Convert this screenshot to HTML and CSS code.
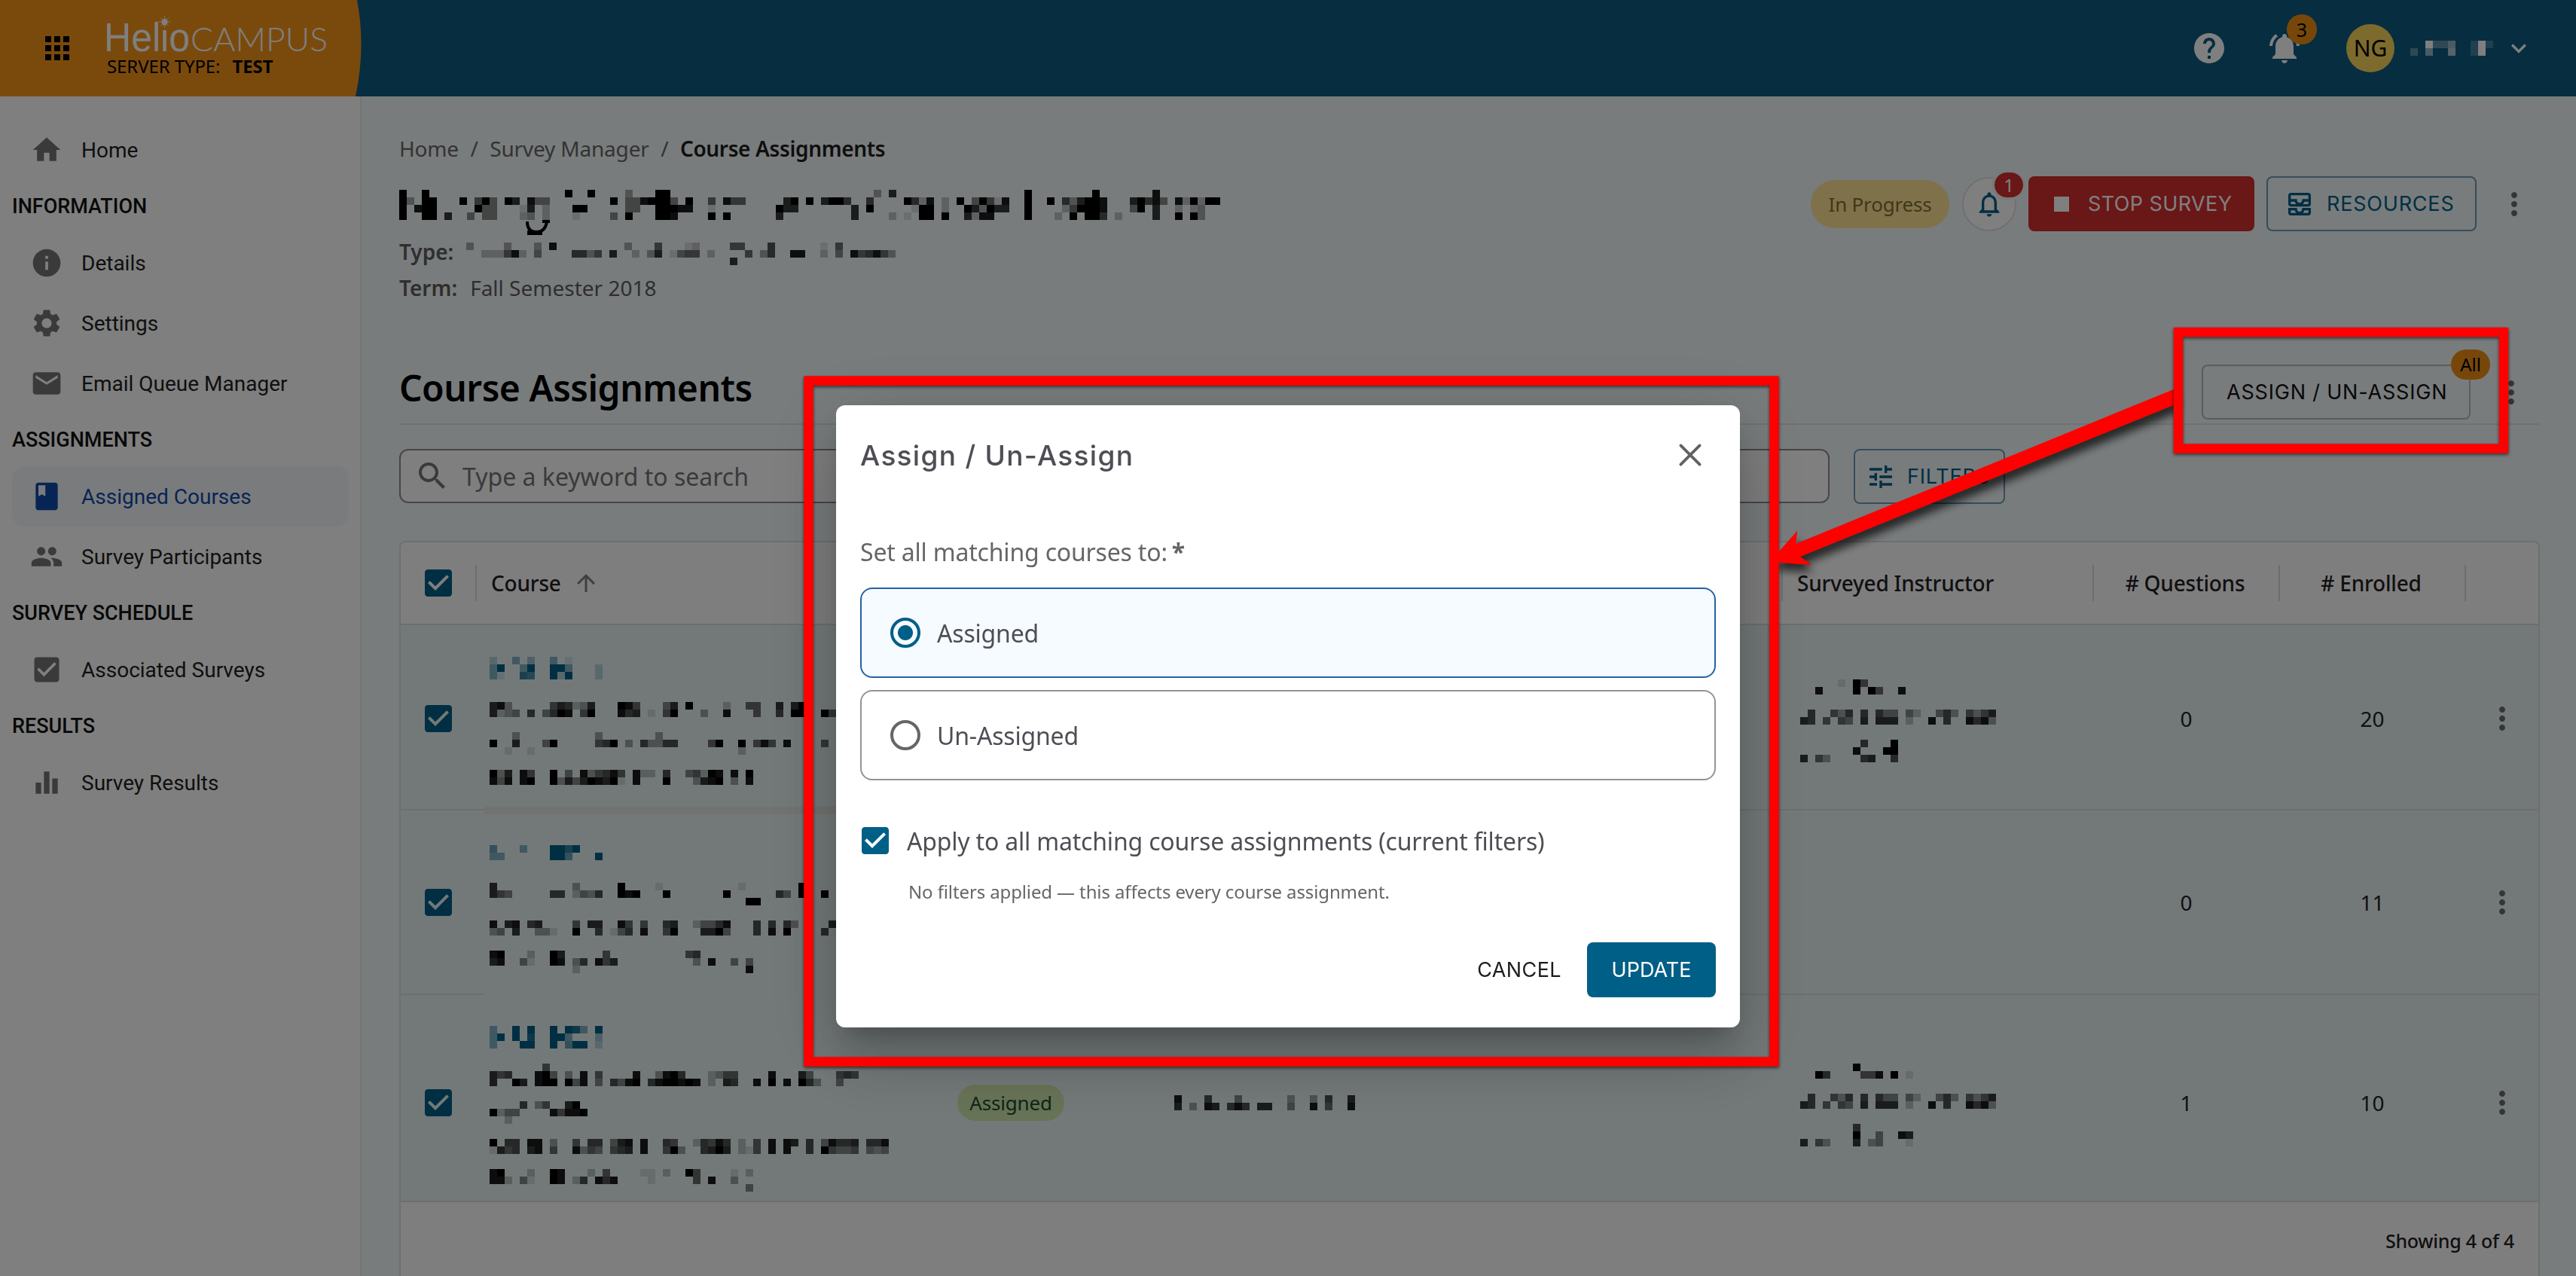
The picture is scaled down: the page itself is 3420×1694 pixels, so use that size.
FILE: index.html
```html
<!DOCTYPE html>
<html lang="en">
<head>
<meta charset="UTF-8" />
<meta name="viewport" content="width=device-width, initial-scale=1" />
<title>Course Assignments</title>
<link rel="stylesheet" href="styles.css">
</head>
<body>

<svg class="sprite" xmlns="http://www.w3.org/2000/svg">
  <symbol id="i-apps" viewBox="0 0 24 24"><path d="M4 8h4V4H4v4zm6 12h4v-4h-4v4zm-6 0h4v-4H4v4zm0-6h4v-4H4v4zm6 0h4v-4h-4v4zm6-10v4h4V4h-4zm-6 4h4V4h-4v4zm6 6h4v-4h-4v4zm0 6h4v-4h-4v4z"/></symbol>
  <symbol id="i-home" viewBox="0 0 24 24"><path d="M10 20v-6h4v6h5v-8h3L12 3 2 12h3v8z"/></symbol>
  <symbol id="i-info" viewBox="0 0 24 24"><path d="M12 2C6.48 2 2 6.48 2 12s4.48 10 10 10 10-4.48 10-10S17.52 2 12 2zm1 15h-2v-6h2v6zm0-8h-2V7h2v2z"/></symbol>
  <symbol id="i-settings" viewBox="0 0 24 24"><path d="M19.14 12.94c.04-.3.06-.61.06-.94 0-.32-.02-.64-.07-.94l2.03-1.58c.18-.14.23-.41.12-.61l-1.92-3.32c-.12-.22-.37-.29-.59-.22l-2.39.96c-.5-.38-1.03-.7-1.62-.94l-.36-2.54c-.04-.24-.24-.41-.48-.41h-3.84c-.24 0-.43.17-.47.41l-.36 2.54c-.59.24-1.13.57-1.62.94l-2.39-.96c-.22-.08-.47 0-.59.22L2.74 8.87c-.12.21-.08.47.12.61l2.03 1.58c-.05.3-.09.63-.09.94s.02.64.07.94l-2.03 1.58c-.18.14-.23.41-.12.61l1.92 3.32c.12.22.37.29.59.22l2.39-.96c.5.38 1.03.7 1.62.94l.36 2.54c.05.24.24.41.48.41h3.84c.24 0 .44-.17.47-.41l.36-2.54c.59-.24 1.13-.56 1.62-.94l2.39.96c.22.08.47 0 .59-.22l1.92-3.32c.12-.22.07-.47-.12-.61l-2.01-1.58zM12 15.6c-1.98 0-3.6-1.62-3.6-3.6s1.62-3.6 3.6-3.6 3.6 1.62 3.6 3.6-1.62 3.6-3.6 3.6z"/></symbol>
  <symbol id="i-mail" viewBox="0 0 24 24"><path d="M20 4H4c-1.1 0-1.99.9-1.99 2L2 18c0 1.1.9 2 2 2h16c1.1 0 2-.9 2-2V6c0-1.1-.9-2-2-2zm0 4l-8 5-8-5V6l8 5 8-5v2z"/></symbol>
  <symbol id="i-book" viewBox="0 0 24 24"><path d="M18 2H6c-1.1 0-2 .9-2 2v16c0 1.1.9 2 2 2h12c1.1 0 2-.9 2-2V4c0-1.1-.9-2-2-2zM6 4h5v8l-2.5-1.5L6 12V4z"/></symbol>
  <symbol id="i-people" viewBox="0 0 24 24"><path d="M16 11c1.66 0 2.99-1.34 2.99-3S17.66 5 16 5c-1.66 0-3 1.34-3 3s1.34 3 3 3zm-8 0c1.66 0 2.99-1.34 2.99-3S9.66 5 8 5C6.34 5 5 6.34 5 8s1.34 3 3 3zm0 2c-2.33 0-7 1.17-7 3.5V19h14v-2.5c0-2.33-4.67-3.5-7-3.5zm8 0c-.29 0-.62.02-.97.05 1.16.84 1.97 1.97 1.97 3.45V19h6v-2.5c0-2.33-4.67-3.5-7-3.5z"/></symbol>
  <symbol id="i-check" viewBox="0 0 24 24"><path d="M19 3H5c-1.11 0-2 .9-2 2v14c0 1.1.89 2 2 2h14c1.11 0 2-.9 2-2V5c0-1.1-.89-2-2-2zm-9 14l-5-5 1.41-1.41L10 14.17l7.59-7.59L19 8l-9 9z"/></symbol>
  <symbol id="i-bars" viewBox="0 0 24 24"><path d="M10 20h4V4h-4v16zm-6 0h4v-8H4v8zM16 9v11h4V9h-4z"/></symbol>
  <symbol id="i-help" viewBox="0 0 24 24"><path d="M12 2C6.48 2 2 6.48 2 12s4.48 10 10 10 10-4.48 10-10S17.52 2 12 2zm1 17h-2v-2h2v2zm2.07-7.75l-.9.92C13.45 12.9 13 13.5 13 15h-2v-.5c0-1.1.45-2.1 1.17-2.83l1.24-1.26c.37-.36.59-.86.59-1.41 0-1.1-.9-2-2-2s-2 .9-2 2H8c0-2.21 1.79-4 4-4s4 1.79 4 4c0 .88-.36 1.68-.93 2.25z"/></symbol>
  <symbol id="i-ring" viewBox="0 0 24 24"><path d="M7.58 4.08L6.15 2.65C3.75 4.48 2.17 7.3 2.03 10.5h2c.15-2.65 1.51-4.97 3.55-6.42zm12.39 6.42h2c-.15-3.2-1.73-6.02-4.12-7.85l-1.42 1.43c2.02 1.45 3.39 3.77 3.54 6.42zM18 11c0-3.07-1.64-5.64-4.5-6.32V4c0-.83-.67-1.5-1.5-1.5s-1.5.67-1.5 1.5v.68C7.63 5.36 6 7.92 6 11v5l-2 2v1h16v-1l-2-2v-5zm-6 11c.14 0 .27-.01.4-.04.65-.14 1.18-.58 1.44-1.18.1-.24.15-.5.15-.78h-4c.01 1.1.9 2 2.01 2z"/></symbol>
  <symbol id="i-bell" viewBox="0 0 24 24"><path d="M12 22c1.1 0 2-.9 2-2h-4c0 1.1.9 2 2 2zm6-6v-5c0-3.07-1.63-5.64-4.5-6.32V4c0-.83-.67-1.5-1.5-1.5s-1.5.67-1.5 1.5v.68C7.64 5.36 6 7.92 6 11v5l-2 2v1h16v-1l-2-2zm-2 1H8v-6c0-2.48 1.51-4.5 4-4.5s4 2.02 4 4.5v6z"/></symbol>
  <symbol id="i-down" viewBox="0 0 24 24"><path d="M16.59 8.59L12 13.17 7.41 8.59 6 10l6 6 6-6z"/></symbol>
  <symbol id="i-stop" viewBox="0 0 24 24"><path d="M6 6h12v12H6z"/></symbol>
  <symbol id="i-inbox" viewBox="0 0 24 24"><path d="M19 3H5c-1.1 0-2 .9-2 2v7c0 1.1.9 2 2 2h14c1.1 0 2-.9 2-2V5c0-1.1-.9-2-2-2zM5 10h3.13c.21.78.67 1.47 1.27 2H5v-2zm14 2h-4.4c.6-.53 1.06-1.22 1.27-2H19v2zm0-4h-5v1c0 1.07-.93 2-2 2s-2-.93-2-2V8H5V5h14v3zm-5 7v1c0 .47-.19.9-.48 1.25-.37.45-.92.75-1.52.75s-1.15-.3-1.52-.75c-.29-.35-.48-.78-.48-1.25v-1H3v4c0 1.1.9 2 2 2h14c1.1 0 2-.9 2-2v-4h-7zm-9 2h3.13c.02.09.06.17.09.25.24.68.65 1.28 1.18 1.75H5v-2zm14 2h-4.4c.54-.47.95-1.07 1.18-1.75.03-.08.07-.17.09-.25H19v2z"/></symbol>
  <symbol id="i-more" viewBox="0 0 24 24"><path d="M12 8c1.1 0 2-.9 2-2s-.9-2-2-2-2 .9-2 2 .9 2 2 2zm0 2c-1.1 0-2 .9-2 2s.9 2 2 2 2-.9 2-2-.9-2-2-2zm0 6c-1.1 0-2 .9-2 2s.9 2 2 2 2-.9 2-2-.9-2-2-2z"/></symbol>
  <symbol id="i-search" viewBox="0 0 24 24"><path d="M15.5 14h-.79l-.28-.27C15.41 12.59 16 11.11 16 9.5 16 5.91 13.09 3 9.5 3S3 5.91 3 9.5 5.91 16 9.5 16c1.61 0 3.09-.59 4.23-1.57l.27.28v.79l5 4.99L20.49 19l-4.99-5zm-6 0C7.01 14 5 11.99 5 9.5S7.01 5 9.5 5 14 7.01 14 9.5 11.99 14 9.5 14z"/></symbol>
  <symbol id="i-tune" viewBox="0 0 24 24"><path d="M3 17v2h6v-2H3zM3 5v2h10V5H3zm10 16v-2h8v-2h-8v-2h-2v6h2zM7 9v2H3v2h4v2h2V9H7zm14 4v-2H11v2h10zm-6-4h2V7h4V5h-4V3h-2v6z"/></symbol>
  <symbol id="i-up" viewBox="0 0 24 24"><path d="M4 12l1.41 1.41L11 7.83V20h2V7.83l5.58 5.59L20 12l-8-8-8 8z"/></symbol>
  <symbol id="i-close" viewBox="0 0 24 24"><path d="M5.7 5.7l12.6 12.6M18.3 5.7L5.7 18.3" fill="none" stroke="currentColor" stroke-width="1.9" stroke-linecap="round"/></symbol>
</svg>

<header class="topbar">
  <div class="brand">
    <svg class="brand-bg" viewBox="0 0 480 128"><path d="M0 0H474Q486 62 472 128H0z"/></svg>
    <svg class="icon icon-48 apps"><use href="#i-apps"/></svg>
    <div class="brand-text">
      <svg class="logo" viewBox="0 0 300 50">
        <text class="logo-helio" x="-4" y="47" textLength="114" lengthAdjust="spacingAndGlyphs">Helio</text>
        <text class="logo-campus" x="111" y="47" textLength="182" lengthAdjust="spacingAndGlyphs">CAMPUS</text>
        <circle cx="76.500" cy="8" r="4"/>
        <path d="M76.500 0v16M68.500 8h16M71 2.500l11 11M82 2.500l-11 11" stroke-width=".8"/>
      </svg>
      <div class="server">SERVER TYPE: <b>TEST</b></div>
    </div>
  </div>
  <div class="user-bar">
    <svg class="icon icon-48"><use href="#i-help"/></svg>
    <div class="notif">
      <svg class="icon icon-48"><use href="#i-ring"/></svg>
      <span class="notif-count">3</span>
    </div>
    <div class="avatar">NG</div>
    <div class="mosaic" data-mosaic="user"></div>
    <svg class="icon icon-40"><use href="#i-down"/></svg>
  </div>
</header>

<div class="layout">
  <nav class="sidebar">
    <a class="nav-item"><svg class="icon icon-44"><use href="#i-home"/></svg>Home</a>
    <div class="nav-title">INFORMATION</div>
    <a class="nav-item"><svg class="icon icon-44"><use href="#i-info"/></svg>Details</a>
    <a class="nav-item"><svg class="icon icon-44"><use href="#i-settings"/></svg>Settings</a>
    <a class="nav-item"><svg class="icon icon-44"><use href="#i-mail"/></svg>Email Queue Manager</a>
    <div class="nav-title">ASSIGNMENTS</div>
    <a class="nav-item active"><svg class="icon icon-44"><use href="#i-book"/></svg>Assigned Courses</a>
    <a class="nav-item"><svg class="icon icon-44"><use href="#i-people"/></svg>Survey Participants</a>
    <div class="nav-title">SURVEY SCHEDULE</div>
    <a class="nav-item"><svg class="icon icon-44"><use href="#i-check"/></svg>Associated Surveys</a>
    <div class="nav-title">RESULTS</div>
    <a class="nav-item"><svg class="icon icon-44"><use href="#i-bars"/></svg>Survey Results</a>
  </nav>

  <main class="main">
    <div class="crumbs">
      <span>Home</span><i>/</i><span>Survey Manager</span><i>/</i><b>Course Assignments</b>
    </div>

    <div class="page-head">
      <div class="survey-info">
        <div class="mosaic survey-title" data-mosaic="title">
        </div>
        <div class="meta"><b>Type:</b><div class="mosaic" data-mosaic="type"></div></div>
        <div class="meta"><b>Term:</b><span>Fall Semester 2018</span></div>
      </div>
      <div class="actions">
        <span class="chip chip-progress">In Progress</span>
        <span class="bell">
          <svg class="icon icon-40"><use href="#i-bell"/></svg>
          <span class="bell-count">1</span>
        </span>
        <button class="btn btn-stop"><svg class="icon icon-40"><use href="#i-stop"/></svg>STOP SURVEY</button>
        <button class="btn btn-outline btn-resources"><svg class="icon icon-40"><use href="#i-inbox"/></svg>RESOURCES</button>
        <svg class="icon icon-48 more"><use href="#i-more"/></svg>
      </div>
    </div>

    <div class="section-head">
      <h1>Course Assignments</h1>
      <div class="section-actions">
        <button class="btn btn-assign">ASSIGN / UN-ASSIGN<span class="all-count">All</span></button>
        <svg class="icon icon-48 more"><use href="#i-more"/></svg>
      </div>
    </div>

    <div class="filters">
      <div class="search"><svg class="icon icon-48"><use href="#i-search"/></svg><span>Type a keyword to search</span></div>
      <button class="btn btn-outline btn-filters"><svg class="icon icon-40"><use href="#i-tune"/></svg>FILTERS</button>
    </div>

    <div class="table">
      <div class="row row-head">
        <div class="cell center"><svg class="icon icon-48 check"><use href="#i-check"/></svg></div>
        <div class="cell">Course<svg class="icon icon-36 sort"><use href="#i-up"/></svg></div>
        <div class="cell"></div>
        <div class="cell"></div>
        <div class="cell">Surveyed Instructor</div>
        <div class="cell center"># Questions</div>
        <div class="cell center"># Enrolled</div>
        <div class="cell"></div>
      </div>
      <div class="row row-1">
        <div class="cell center"><svg class="icon icon-48 check"><use href="#i-check"/></svg></div>
        <div class="cell course"><div class="mosaic" data-mosaic="course1"></div></div>
        <div class="cell"></div>
        <div class="cell"></div>
        <div class="cell instructor"><div class="mosaic" data-mosaic="instructor1"></div></div>
        <div class="cell center">0</div>
        <div class="cell center">20</div>
        <div class="cell center"><svg class="icon icon-48 more"><use href="#i-more"/></svg></div>
      </div>
      <div class="row row-2">
        <div class="cell center"><svg class="icon icon-48 check"><use href="#i-check"/></svg></div>
        <div class="cell course"><div class="mosaic" data-mosaic="course2"></div></div>
        <div class="cell"></div>
        <div class="cell"></div>
        <div class="cell"></div>
        <div class="cell center">0</div>
        <div class="cell center">11</div>
        <div class="cell center"><svg class="icon icon-48 more"><use href="#i-more"/></svg></div>
      </div>
      <div class="row row-3">
        <div class="cell center"><svg class="icon icon-48 check"><use href="#i-check"/></svg></div>
        <div class="cell course"><div class="mosaic" data-mosaic="course3"></div></div>
        <div class="cell"><span class="chip chip-assigned">Assigned</span></div>
        <div class="cell"><div class="mosaic" data-mosaic="name3"></div></div>
        <div class="cell instructor"><div class="mosaic" data-mosaic="instructor3"></div></div>
        <div class="cell center">1</div>
        <div class="cell center">10</div>
        <div class="cell center"><svg class="icon icon-48 more"><use href="#i-more"/></svg></div>
      </div>
      <div class="table-foot">Showing 4 of 4</div>
    </div>
  </main>
</div>

<div class="backdrop">
  <div class="modal">
    <div class="modal-head">
      <h2>Assign / Un-Assign</h2>
      <svg class="icon icon-48"><use href="#i-close"/></svg>
    </div>
    <div class="field-label">Set all matching courses to:<b>*</b></div>
    <label class="option selected"><span class="radio"></span>Assigned</label>
    <label class="option"><span class="radio"></span>Un-Assigned</label>
    <label class="apply"><svg class="icon icon-48 check"><use href="#i-check"/></svg>Apply to all matching course assignments (current filters)</label>
    <p class="hint">No filters applied — this affects every course assignment.</p>
    <div class="modal-actions">
      <button class="btn btn-cancel">CANCEL</button>
      <button class="btn btn-update">UPDATE</button>
    </div>
  </div>
</div>

<!-- callout frames and arrow -->
<svg class="callouts" viewBox="0 0 3420 1694">
  <path class="arrow" d="M2350 746L2386 705L2384 722L2888 516V537L2390 739L2405 750z"/>
  <rect class="frame" x="1073.5" y="505.5" width="1282" height="904"/>
  <rect class="frame" x="2892" y="441" width="432" height="154.500"/>
  <path class="arrow-tip" d="M2350 746L2386 705L2384 722L2400 716V734L2390 739L2405 750z"/>
</svg>

<script src="script.js"></script>
</body>
</html>
```
FILE: styles.css
```css
* {
  box-sizing: border-box;
}

body {
  margin: 0;
  width: 3420px;
  height: 1694px;
  overflow: hidden;
  background: #f2f8fa;
  color: #212121;
  font-family: "Noto Sans", "Open Sans", sans-serif;
  font-size: 28px;
}

h1, h2, p {
  margin: 0;
}

.sprite {
  display: none;
}

.icon {
  display: block;
  flex: none;
  fill: currentColor;
}
.icon-36 { width: 36px; height: 36px; }
.icon-40 { width: 40px; height: 40px; }
.icon-44 { width: 44px; height: 44px; }
.icon-48 { width: 48px; height: 48px; }

.more { color: #6b6b6b; }
.check { color: #005f87; }

.mosaic svg {
  display: block;
  overflow: visible;
}

/* top bar */
.topbar {
  display: flex;
  justify-content: space-between;
  height: 128px;
  background: #0e5a80;
  color: #fff;
}
.brand {
  position: relative;
  display: flex;
  width: 480px;
  padding: 21px 0 0 52px;
}
.brand-bg {
  position: absolute;
  left: 0;
  top: 0;
  width: 480px;
  height: 128px;
  fill: #f4951b;
}
.apps {
  position: relative;
  margin-top: 19px;
  color: #000;
}
.brand-text {
  position: relative;
  margin-left: 42px;
}
.logo {
  display: block;
  width: 300px;
  height: 50px;
  overflow: visible;
  fill: #fff;
  stroke: #fff;
  stroke-width: 0;
}
.logo-helio {
  font-family: "Liberation Sans", sans-serif;
  font-size: 54px;
}
.logo-campus {
  font-family: Lato, sans-serif;
  font-weight: 300;
  font-size: 43px;
}
.server {
  margin-top: 1px;
  line-height: 32px;
  font-size: 24px;
  letter-spacing: -.1px;
  color: #000;
}
.server b {
  margin-left: 10px;
}
.user-bar {
  display: flex;
  align-items: center;
  padding-right: 56px;
}
.notif {
  position: relative;
  margin-left: 52px;
}
.notif-count {
  position: absolute;
  left: 27px;
  top: -21px;
  width: 40px;
  height: 40px;
  border-radius: 50%;
  background: #ef8f12;
  color: #000;
  font-size: 25px;
  line-height: 40px;
  text-align: center;
}
.avatar {
  width: 64px;
  height: 64px;
  margin: 0 21px 0 58px;
  border-radius: 50%;
  background: #fbd65b;
  color: #000;
  font-size: 30px;
  line-height: 64px;
  text-align: center;
}
.user-bar .mosaic {
  margin-right: 14px;
}

/* sidebar */
.layout {
  display: flex;
  height: 1566px;
}
.sidebar {
  width: 480px;
  padding: 31px 16px;
  background: #fff;
  border-right: 2px solid #e6eaeb;
  font-family: Roboto, sans-serif;
}
.nav-item {
  display: flex;
  align-items: center;
  gap: 24px;
  width: 447px;
  height: 80px;
  padding-left: 24px;
  border-radius: 16px;
}
.nav-item .icon {
  color: #757575;
}
.nav-item.active,
.nav-item.active .icon {
  color: #0f4aa8;
}
.nav-item.active {
  background: #f5f6fa;
}
.nav-title {
  height: 70px;
  line-height: 71px;
  font-size: 27px;
  font-weight: 500;
  color: #111;
}

/* page header */
.main {
  flex: 1;
  padding: 49px 48px 0 50px;
}
.crumbs {
  display: flex;
  height: 41px;
  line-height: 40px;
  letter-spacing: -.18px;
  color: #666;
}
.crumbs i {
  margin: 0 15.5px;
  font-style: normal;
}
.crumbs b {
  font-weight: 600;
  letter-spacing: -.35px;
  color: #1c1c1c;
}
.page-head {
  display: flex;
  justify-content: space-between;
  height: 185px;
}
.survey-title {
  height: 40px;
  margin: 34px 0 22px;
}
.meta {
  display: flex;
  height: 40px;
  margin-bottom: 8px;
  line-height: 40px;
  color: #5c5c5c;
}
.meta b {
  margin-right: 17px;
  font-weight: 600;
}
.meta .mosaic {
  padding-top: 8px;
}
.actions {
  display: flex;
  align-items: center;
  height: 73px;
  margin-top: 16px;
  padding-right: 10px;
}
.actions .more {
  margin-left: 26px;
}
.chip {
  white-space: nowrap;
}
.chip-progress {
  width: 184px;
  height: 64px;
  border-radius: 32px;
  background: #ffe294;
  color: #80702f;
  font-size: 26px;
  line-height: 64px;
  letter-spacing: -.2px;
  text-align: center;
}
.bell {
  position: relative;
  width: 72px;
  height: 72px;
  margin: 0 16px 0 17px;
  padding: 14px;
  border: 2px solid #e0e0e4;
  border-radius: 50%;
  background: #fff;
  color: #005f87;
}
.bell-count {
  position: absolute;
  left: 41px;
  top: -8px;
  width: 38px;
  height: 33px;
  border-radius: 17px;
  background: #d32f2f;
  box-shadow: 0 0 0 4px #f2f4f6;
  color: #fff;
  font-size: 24px;
  line-height: 33px;
  text-align: center;
}

.btn {
  display: flex;
  align-items: center;
  height: 73px;
  padding: 0;
  border: 2px solid transparent;
  border-radius: 8px;
  background: none;
  color: inherit;
  font-family: Inter, sans-serif;
  font-size: 27px;
  letter-spacing: .8px;
  white-space: nowrap;
}
.btn-outline {
  border-color: #6f9ab4;
  color: #005f87;
}
.btn-stop {
  width: 300px;
  padding-left: 22px;
  background: #d32f2f;
  color: #fff;
  letter-spacing: .4px;
}
.btn-stop .icon {
  margin-right: 15px;
}
.btn-resources {
  width: 279px;
  margin-left: 16px;
  padding-left: 22px;
}
.btn-resources .icon {
  margin-right: 16px;
}

/* section */
.section-head {
  display: flex;
  justify-content: space-between;
  align-items: flex-end;
  height: 98px;
  margin-top: 63px;
  padding-bottom: 5px;
  border-bottom: 2px solid #dfe2e4;
}
.section-head h1 {
  margin-bottom: 12px;
  font-size: 48px;
  font-weight: 600;
  line-height: 60px;
  letter-spacing: -.5px;
  color: #000;
}
.section-actions {
  display: flex;
  align-items: center;
  padding-right: 14px;
}
.section-actions .more {
  margin-left: 30px;
}
.btn-assign {
  position: relative;
  width: 357px;
  padding-left: 31px;
  border-color: #b4b9ba;
  color: #111;
}
.all-count {
  position: absolute;
  right: -28px;
  top: -22px;
  width: 52px;
  height: 40px;
  border-radius: 20px;
  background: #ef8f12;
  color: #000;
  font-family: "Noto Sans", sans-serif;
  font-size: 24px;
  line-height: 40px;
  letter-spacing: 0;
  text-align: center;
}
.filters {
  display: flex;
  gap: 32px;
  height: 72px;
  margin-top: 32px;
}
.search {
  display: flex;
  align-items: center;
  gap: 16px;
  width: 1899px;
  height: 72px;
  padding-left: 18px;
  border: 2px solid #8c8c8c;
  border-radius: 12px;
  background: #fff;
  color: #757575;
  font-size: 32px;
}
.btn-filters {
  width: 201px;
  padding-left: 14px;
}
.btn-filters .icon {
  margin-right: 15px;
}

/* table */
.table {
  height: 1000px;
  margin-top: 50px;
  border: 2px solid #dcdfe1;
  border-radius: 8px;
  background: #fffdff;
}
.row {
  display: grid;
  grid-template-columns: 100px 618px 288px 828px 413px 247px 247px 97px;
  border-bottom: 2px solid #d9dedf;
  background: #e7f2f2;
}
.cell {
  display: flex;
  align-items: center;
  padding-left: 21px;
}
.cell.center {
  justify-content: center;
  padding: 0;
}
.row-head {
  height: 110px;
  background: none;
  font-weight: 500;
  letter-spacing: -.22px;
}
.row-head .cell {
  position: relative;
  padding-left: 20px;
}
.row-head .cell.center {
  padding: 0 3px 0 0;
}
.row-head .cell:first-child {
  padding: 0;
}
.row-head .cell:nth-child(n+5)::before,
.row-head .cell:nth-child(2)::before {
  content: "";
  position: absolute;
  left: -1px;
  top: 30px;
  width: 2px;
  height: 48px;
  background: #dadada;
}
.sort {
  margin-left: 15px;
  color: #808080;
}
.row-1 {
  height: 246px;
  padding-top: 4px;
}
.row-2 {
  height: 245px;
}
.row-3 {
  height: 275px;
  padding-top: 13px;
}
.course,
.instructor {
  align-items: flex-start;
  padding-left: 18px;
}
.instructor {
  padding-left: 24px;
}
.row-1 .course { padding-top: 38px; }
.row-2 .course { padding-top: 46px; }
.row-3 .course { padding-top: 28px; }
.row-1 .instructor { padding-top: 68px; }
.row-3 .instructor { padding-top: 78px; }
.chip-assigned {
  width: 142px;
  height: 48px;
  border-radius: 24px;
  background: #cfe7ad;
  color: #1c4a2b;
  font-size: 26px;
  line-height: 48px;
  letter-spacing: -.2px;
  text-align: center;
}
.table-foot {
  padding: 31px 32px 0;
  font-size: 25px;
  font-weight: 500;
  line-height: 40px;
  letter-spacing: -.25px;
  text-align: right;
}

/* dialog */
.backdrop {
  position: fixed;
  left: 0;
  top: 0;
  width: 3420px;
  height: 1694px;
  padding-top: 538px;
  background: rgba(0, 0, 0, .5);
}
.modal {
  width: 1200px;
  height: 826px;
  margin: 0 auto;
  padding: 42px 32px 0;
  border-radius: 12px;
  background: #fff;
  box-shadow: 0 22px 30px -14px rgba(0, 0, 0, .2), 0 48px 76px 6px rgba(0, 0, 0, .14), 0 18px 92px 16px rgba(0, 0, 0, .12);
  color: #4f4d55;
  font-size: 32px;
  letter-spacing: -.19px;
}
.modal-head {
  display: flex;
  justify-content: space-between;
  align-items: center;
  height: 48px;
  padding-right: 10px;
}
.modal-head h2 {
  font-family: Inter, sans-serif;
  font-size: 37px;
  font-weight: 500;
  letter-spacing: 1.3px;
}
.modal-head .icon {
  color: #616161;
}
.field-label {
  height: 44px;
  margin-top: 83px;
  line-height: 44px;
  color: #666;
}
.field-label b {
  margin-left: 6px;
}
.option {
  display: flex;
  align-items: center;
  height: 120px;
  margin-top: 25px;
  padding-left: 38px;
  border: 2px solid #949494;
  border-radius: 16px;
}
.option + .option {
  margin-top: 16px;
}
.option.selected {
  border-color: #2463a4;
  background: #f5fbfe;
}
.radio {
  width: 40px;
  height: 40px;
  margin-right: 22px;
  border: 4px solid #666;
  border-radius: 50%;
}
.selected .radio {
  border-color: #005f87;
  background: radial-gradient(circle, #005f87 9.5px, transparent 10.5px);
}
.apply {
  display: flex;
  align-items: center;
  gap: 18px;
  height: 48px;
  margin: 56px 0 0 -4px;
}
.hint {
  margin: 24px 0 0 64px;
  font-size: 24px;
  line-height: 40px;
  letter-spacing: -.12px;
  color: #666;
}
.modal-actions {
  display: flex;
  justify-content: flex-end;
  gap: 32px;
  margin-top: 47px;
}
.btn-cancel {
  color: #1c1c1c;
  letter-spacing: .4px;
}
.btn-update {
  justify-content: center;
  width: 171px;
  background: #005f87;
  color: #fff;
  letter-spacing: 0;
}

.callouts {
  position: fixed;
  left: 0;
  top: 0;
  width: 3420px;
  height: 1694px;
}
.frame {
  fill: none;
  stroke: #f00;
  stroke-width: 12.5px;
  filter: drop-shadow(0 2px 2px rgba(0, 0, 0, .6));
}
.arrow {
  fill: #f00;
  filter: drop-shadow(4px 10px 6px rgba(0, 0, 0, .7));
}
.arrow-tip {
  fill: #f00;
}
```
FILE: script.js
```js
// Redacted text. Each line is [row, "col:level ..."], level 1 (faint) to 9 (solid).
const CELL = 10;

const mosaics = {
  user: {
    cols: 11, height: 2, color: "#fff",
    rows: [
      [0, "2:9 3:3 4:3 5:5 8:2 9:9 10:2"],
      [1, "0:3 2:5 5:6 8:2 9:9"],
    ],
  },
  title: {
    cols: 109, height: 4, color: "#000",
    rows: [
      [0, "0:9 3:9 22:9 25:9 30:3 34:9 35:9 63:3 65:7 83:9 92:9 100:8"],
      [1, "0:9 1:3 3:9 4:9 8:9 10:5 11:9 12:4 14:9 15:7 17:8 18:4 19:4 28:9 30:4 31:4 32:8 33:9 34:9 35:9 36:4 38:9 41:5 43:8 44:5 45:5 51:7 52:9 54:9 56:7 57:9 58:9 59:6 62:6 67:9 68:6 69:2 70:8 72:2 74:9 76:4 77:9 78:5 79:1 80:8 83:9 86:9 88:6 89:3 90:7 91:9 92:9 93:8 97:7 98:9 99:6 100:8 101:4 103:8 104:2 105:9 106:2 107:9 108:9"],
      [2, "0:9 2:8 3:9 4:9 10:9 11:4 12:4 16:1 17:7 19:2 23:9 24:9 30:4 31:4 34:9 35:9 36:9 37:8 38:8 41:1 50:9 51:7 52:7 60:7 62:9 68:1 69:9 70:9 72:2 75:9 76:7 77:3 78:9 79:7 80:7 83:9 88:2 89:5 90:9 91:9 92:9 93:8 97:4 98:9 100:7 103:2 105:2 106:3"],
      [3, "0:9 3:9 4:9 6:7 9:4 11:4 12:4 16:2 17:3 19:2 23:1 28:4 30:9 34:9 35:9 36:8 41:9 43:9 50:7 60:7 65:2 67:1 69:9 70:9 72:9 75:7 76:2 77:8 78:8 83:9 87:2 89:9 91:9 92:9 93:6 95:2 100:7 103:9 105:9 106:3"],
    ],
    extra: '<path d="M170 42q0 14 12 14t14-14" fill="none" stroke="#000" stroke-width="4"/><path d="M190 40h10v4h-10zM170 54h20v6h-20z"/>',
  },
  type: {
    cols: 66, height: 3, color: "#000", offset: 9,
    rows: [
      [0, "9:3 14:3 18:3 20:8 30:3 34:5 38:1 39:2 44:5 45:5 49:6 56:1 58:5"],
      [1, "11:2 12:2 13:2 14:5 15:8 16:2 18:4 23:6 24:6 25:3 26:5 28:7 31:2 33:3 34:7 36:1 37:4 38:5 39:5 41:2 46:5 48:3 49:6 52:8 53:8 56:2 58:4 60:8 61:5 62:6 63:8 64:5 65:3"],
      [2, "44:7"],
    ],
  },
  course1: {
    cols: 48, height: 17, linkRows: 3, color: "#000",
    rows: [
      [0, "0:2 3:4 5:3 8:4 10:1"],
      [1, "0:4 1:9 4:4 5:9 8:9 9:9 10:4 14:2"],
      [2, "0:4 1:1 4:7 5:6 8:9 9:2 10:9 14:2"],
      [6, "0:7 1:8 2:3 8:5 9:7 10:6 11:2 12:3 13:7 17:9 18:8 19:5 23:4 24:7 26:9 31:2 34:5 35:5 38:7 40:7 41:9"],
      [7, "0:7 1:2 2:3 3:4 5:6 7:4 8:6 9:9 10:8 12:5 13:9 17:8 18:6 19:7 21:1 23:5 24:9 28:3 31:8 35:5 38:6 40:9 41:9 44:9 45:5"],
      [10, "3:3 14:3 22:3"],
      [11, "0:9 3:7 7:4 8:9 14:5 15:6 16:9 18:3 20:6 21:3 22:3 23:6 24:6 29:5 30:9 33:9 35:5 36:8 37:5 39:8 44:5"],
      [12, "2:1 5:1 33:2"],
      [15, "0:9 1:3 2:7 4:8 5:5 8:9 10:4 12:8 13:3 14:5 15:6 16:8 17:5 19:8 20:2 21:2 23:6 26:4 27:5 28:2 29:9 30:8 32:8 34:9"],
      [16, "0:8 1:4 2:8 4:8 5:9 8:9 9:3 10:7 11:4 12:7 13:9 14:8 15:7 16:9 17:1 19:8 23:9 27:3 28:7 29:8 30:9 32:3 34:8"],
    ],
    extra: '<rect x="-7" y="199" width="625" height="10" fill="#e4e4e1"/>',
  },
  course2: {
    cols: 48, height: 17, linkRows: 2, color: "#000",
    rows: [
      [0, "0:5 4:4 8:9 9:9 10:7 11:9"],
      [1, "0:4 1:4 8:9 9:9 10:5 14:9"],
      [5, "0:7 11:3 17:9 22:1 33:1 41:9"],
      [6, "0:7 1:5 2:4 8:6 9:6 11:2 12:4 13:3 14:6 17:9 18:8 19:9 23:9 31:9 38:6 39:4 41:9 44:9"],
      [7, "34:9 35:9"],
      [10, "0:8 2:7 3:8 5:6 6:7 11:5 13:7 14:7 17:8 18:5 20:5 23:6 24:7 27:2 28:4 29:4 30:6 31:8 35:6 37:6 39:6 40:3 45:7"],
      [11, "0:3 1:4 3:7 6:3 7:3 8:1 11:9 14:6 16:1 17:4 18:6 20:8 23:5 24:9 28:7 29:7 30:9 31:4 35:6 37:8 39:9 44:6"],
      [14, "0:8 1:9 5:2 8:9 9:7 15:5 26:5 27:6"],
      [15, "0:7 1:8 4:4 5:1 8:9 9:8 11:3 12:6 14:8 15:5 16:7 27:3 29:8 32:4 34:4"],
      [16, "11:2 34:8"],
    ],
    extra: '<rect x="-7" y="196" width="625" height="3" fill="#e7f2f2"/>',
  },
  course3: {
    cols: 54, height: 22, linkRows: 3, color: "#000",
    rows: [
      [0, "0:4 3:9 5:9 8:9 10:9 11:8 12:4 14:9"],
      [1, "0:4 1:9 3:9 5:8 8:9 9:9 10:4 14:3"],
      [2, "0:4 4:9 5:9 8:9 10:5 11:9 12:9 14:2"],
      [5, "7:5"],
      [6, "0:7 1:5 2:6 6:8 7:9 8:4 10:3 12:8 14:5 19:8 22:3 23:8 24:9 25:6 29:2 30:3 31:5 32:5 37:8 41:7 42:4 46:5 47:6 48:5"],
      [7, "0:7 3:9 4:7 6:8 7:9 8:9 10:9 11:4 12:8 14:4 16:6 17:4 18:8 19:9 21:6 22:8 23:9 24:9 25:8 26:9 27:8 29:2 31:7 32:6 35:8 37:9 39:8 41:9 42:6 43:3 46:4"],
      [10, "4:6 6:3 7:5 10:7 11:9"],
      [11, "0:9 1:2 2:4 3:4 8:8 9:5 10:8 11:8 12:9"],
      [12, "2:2"],
      [15, "0:9 2:6 3:6 5:8 6:8 8:3 11:5 13:6 14:6 16:4 17:7 18:8 20:8 23:6 24:5 27:2 28:6 29:5 30:8 31:6 33:2 35:5 37:8 39:8 40:7 42:6 44:4 45:8 46:6 47:6 48:7 50:6 51:6 52:8"],
      [16, "0:1 1:7 2:5 3:6 5:7 6:8 8:5 11:8 12:3 13:5 14:4 16:5 17:6 18:7 20:8 23:5 24:9 25:3 28:6 29:7 30:9 31:7 33:2 34:1 35:5 37:8 39:8 42:6 44:9 45:5 46:4 47:4 48:5 50:4 51:3 52:4"],
      [19, "0:8 1:9 5:2 8:9 9:8 13:2 15:5 20:1 21:1 23:2 26:9 27:5 32:1 34:2"],
      [20, "0:8 1:8 2:2 4:4 5:1 8:9 9:8 11:2 12:6 14:8 15:6 16:8 21:1 27:5 29:8 32:3"],
      [21, "34:4"],
    ],
  },
  name3: {
    cols: 24, height: 2, color: "#000",
    rows: [
      [0, "0:8 4:6 8:4 15:3 18:3 20:6 23:7"],
      [1, "0:7 2:3 4:8 5:7 7:6 8:8 9:6 11:7 12:7 15:4 18:8 20:5 23:8"],
    ],
  },
  instructor1: {
    cols: 26, height: 11, color: "#000",
    rows: [
      [0, "5:1 7:9 8:5"],
      [1, "2:8 7:9 9:9 10:5 13:8"],
      [4, "1:6 4:5 5:3 6:6 8:6 10:6 11:4 12:4 14:4 15:2 18:4 19:6 20:3 22:5 23:3 24:5 25:7"],
      [5, "0:7 1:6 3:5 5:5 6:4 8:7 10:7 11:7 12:7 14:2 17:8 19:6 22:8 23:6 24:8 25:3"],
      [8, "8:6 12:9"],
      [9, "7:8 11:9 12:9"],
      [10, "0:7 2:5 3:3 8:6 9:7 12:6"],
    ],
  },
  instructor3: {
    cols: 26, height: 11, color: "#000",
    rows: [
      [0, "7:9"],
      [1, "2:9 3:6 8:5 9:5 10:8 12:9 14:1"],
      [4, "1:6 4:5 5:3 6:6 8:6 10:6 11:4 12:4 14:4 15:2 18:4 19:6 20:3 22:5 23:3 24:5 25:7"],
      [5, "0:7 1:6 3:5 5:5 6:4 8:7 10:7 11:7 12:7 14:2 17:8 19:6 22:8 23:6 24:8 25:3"],
      [8, "7:6"],
      [9, "7:9 10:4 13:8 14:7"],
      [10, "0:7 2:5 3:3 7:7 9:3 10:4 14:1"],
    ],
  },
};

function drawMosaic(el) {
  const m = mosaics[el.dataset.mosaic];
  const offset = m.offset || 0;
  let out = m.extra || "";
  m.rows.forEach(([row, cells]) => {
    const fill = row < (m.linkRows || 0) ? "#005f87" : m.color;
    cells.split(" ").forEach(cell => {
      const [col, level] = cell.split(":").map(Number);
      out += `<rect x="${(col - offset) * CELL}" y="${row * CELL}" width="${CELL}" height="${CELL}" fill="${fill}" fill-opacity="${level / 9}"/>`;
    });
  });
  el.innerHTML = `<svg width="${(m.cols - offset) * CELL}" height="${m.height * CELL}">${out}</svg>`;
}

document.querySelectorAll("[data-mosaic]").forEach(drawMosaic);
```
